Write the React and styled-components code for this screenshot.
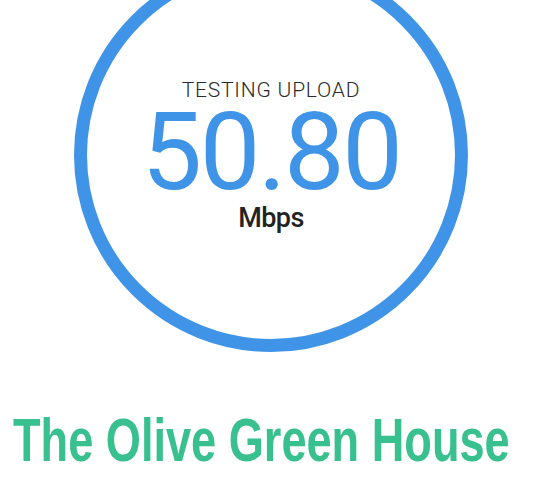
import React from "react";
import styled, { createGlobalStyle } from "styled-components";

const Global = createGlobalStyle`
  html, body { margin: 0; padding: 0; background: #ffffff; }
`;

const Page = styled.div`
  width: 540px;
  height: 500px;
  overflow: hidden;
  display: flex;
  flex-direction: column;
  align-items: flex-start;
  background: #ffffff;
`;

const Ring = styled.div`
  box-sizing: border-box;
  width: 394px;
  height: 394px;
  margin-top: -42px;
  margin-left: 74px;
  border: 13px solid #3f94e8;
  border-radius: 50%;
  display: flex;
  flex-direction: column;
  align-items: center;
  padding-top: 109px;
  flex-shrink: 0;
`;

const Label = styled.div`
  font-family: Roboto, "Liberation Sans", sans-serif;
  font-weight: 300;
  font-size: 21px;
  line-height: 1;
  letter-spacing: 0.8px;
  color: #2a2a2a;
  white-space: nowrap;
`;

const Speed = styled.div`
  font-family: Roboto, "Liberation Sans", sans-serif;
  font-weight: 400;
  font-size: 108px;
  line-height: 0.9;
  margin-top: 3px;
  letter-spacing: -2.5px;
  color: #3f94e8;
  white-space: nowrap;
`;

const Unit = styled.div`
  font-family: Roboto, "Liberation Sans", sans-serif;
  font-weight: 500;
  font-size: 27px;
  line-height: 1;
  margin-top: 4px;
  letter-spacing: -0.6px;
  color: #232323;
`;

const Brand = styled.div`
  font-family: "Liberation Sans", Arial, sans-serif;
  font-weight: 700;
  font-size: 61px;
  line-height: 1;
  color: #39c08f;
  white-space: nowrap;
  margin-top: 58px;
  margin-left: 13px;
  transform: scaleX(0.74);
  transform-origin: left center;
`;

export default function App() {
  return (
    <>
      <Global />
      <Page>
        <Ring>
          <Label>TESTING UPLOAD</Label>
          <Speed>50.80</Speed>
          <Unit>Mbps</Unit>
        </Ring>
        <Brand>The Olive Green House</Brand>
      </Page>
    </>
  );
}
